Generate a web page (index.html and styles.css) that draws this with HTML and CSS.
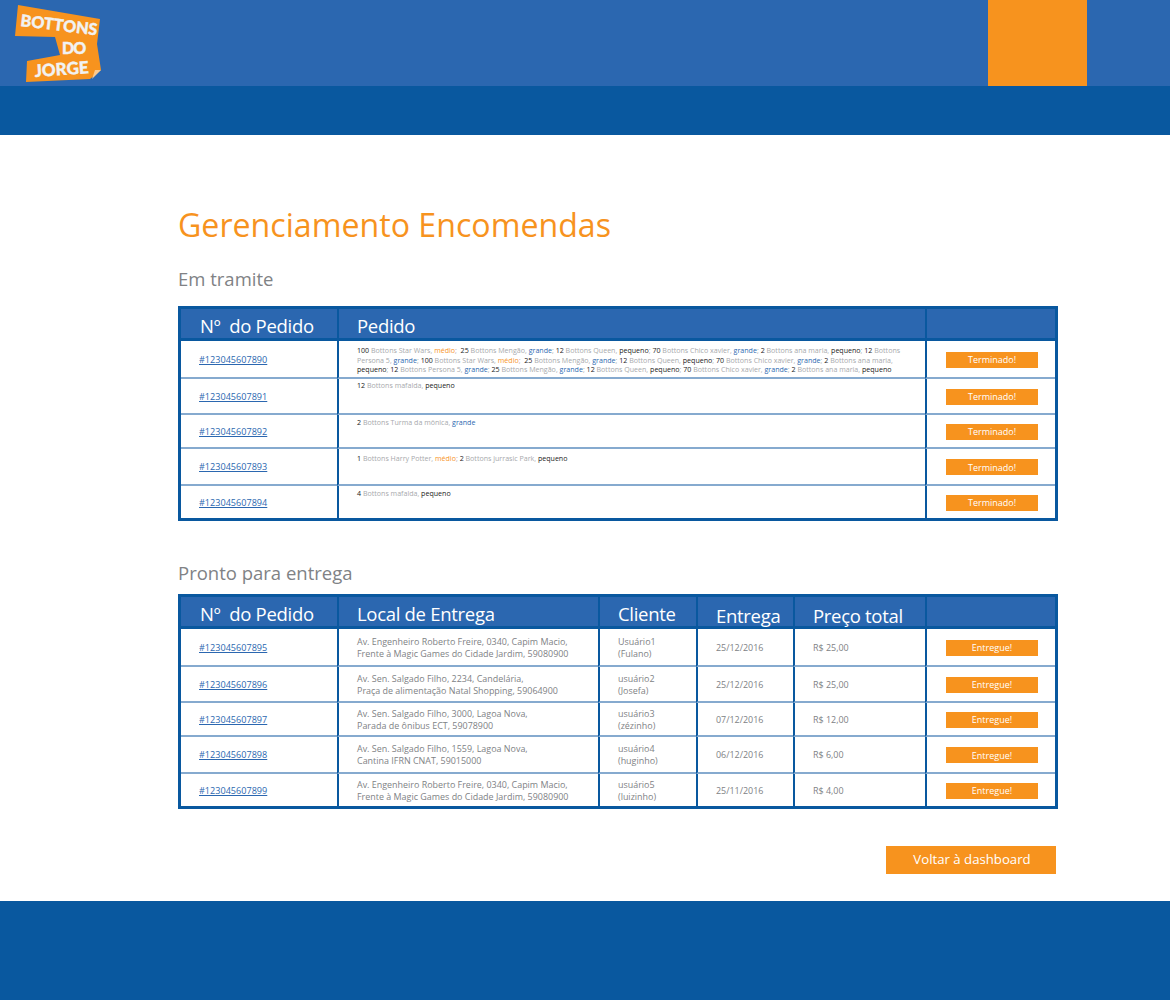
FILE: index.html
```html
<!DOCTYPE html>
<html lang="pt-BR">
<head>
<meta charset="utf-8">
<title>Gerenciamento Encomendas</title>
<link rel="stylesheet" href="styles.css">
</head>
<body>
<header class="top">
  <div class="brand-bar">
    <svg class="logo" width="110" height="86" viewBox="0 0 110 86" role="img" aria-label="Bottons do Jorge">
      <polygon class="logo-paper" points="18,5 100,19 97,44 101,70 90,79 26,82 27,61 60,55 55,37 15,36"/>
      <polygon class="logo-fold" points="95,70 101,70 92,79"/>
      <text class="logo-text" x="20" y="26" transform="rotate(7 20 26)">BOTTONS</text>
      <text class="logo-text logo-do" x="62" y="54">DO</text>
      <text class="logo-text logo-jorge" x="35" y="77" transform="rotate(-4 35 77)">JORGE</text>
    </svg>
    <div class="profile-box"></div>
  </div>
  <div class="nav-bar"></div>
</header>

<main class="content">
  <h1 class="title">Gerenciamento Encomendas</h1>

  <h2 class="section-title">Em tramite</h2>
  <table class="orders">
    <colgroup><col class="c-id"><col class="c-order"><col class="c-action"></colgroup>
    <thead><tr><th>Nº&nbsp; do Pedido</th><th>Pedido</th><th></th></tr></thead>
    <tbody>
      <tr class="h38">
        <td class="id"><a href="#">#123045607890</a></td>
        <td class="items"><b>100</b> Bottons Star Wars, <i class="m">médio</i>;&nbsp; <b>25</b> Bottons Mengão, <i class="g">grande</i>; <b>12</b> Bottons Queen, <b>pequeno</b>; <b>70</b> Bottons Chico xavier, <i class="g">grande</i>; <b>2</b> Bottons ana maria, <b>pequeno</b>; <b>12</b> Bottons<br>Persona 5, <i class="g">grande</i>; <b>100</b> Bottons Star Wars, <i class="m">médio</i>;&nbsp; <b>25</b> Bottons Mengão, <i class="g">grande</i>; <b>12</b> Bottons Queen, <b>pequeno</b>; <b>70</b> Bottons Chico xavier, <i class="g">grande</i>; <b>2</b> Bottons ana maria,<br><b>pequeno</b>; <b>12</b> Bottons Persona 5, <i class="g">grande</i>; <b>25</b> Bottons Mengão, <i class="g">grande</i>; <b>12</b> Bottons Queen, <b>pequeno</b>; <b>70</b> Bottons Chico xavier, <i class="g">grande</i>; <b>2</b> Bottons ana maria, <b>pequeno</b></td>
        <td class="action"><button class="mini-btn">Terminado!</button></td>
      </tr>
      <tr class="h36">
        <td class="id"><a href="#">#123045607891</a></td>
        <td class="items"><b>12</b> Bottons mafalda, <b>pequeno</b></td>
        <td class="action"><button class="mini-btn">Terminado!</button></td>
      </tr>
      <tr class="h34">
        <td class="id"><a href="#">#123045607892</a></td>
        <td class="items"><b>2</b> Bottons Turma da mônica, <i class="g">grande</i></td>
        <td class="action"><button class="mini-btn">Terminado!</button></td>
      </tr>
      <tr class="h37">
        <td class="id"><a href="#">#123045607893</a></td>
        <td class="items"><b>1</b> Bottons Harry Potter, <i class="m">médio</i>; <b>2</b> Bottons jurrasic Park, <b>pequeno</b></td>
        <td class="action"><button class="mini-btn">Terminado!</button></td>
      </tr>
      <tr class="h32">
        <td class="id"><a href="#">#123045607894</a></td>
        <td class="items"><b>4</b> Bottons mafalda, <b>pequeno</b></td>
        <td class="action"><button class="mini-btn">Terminado!</button></td>
      </tr>
    </tbody>
  </table>

  <h2 class="section-title second">Pronto para entrega</h2>
  <table class="orders">
    <colgroup><col class="c-id"><col class="c-place"><col class="c-client"><col class="c-date"><col class="c-price"><col class="c-action"></colgroup>
    <thead><tr><th>Nº&nbsp; do Pedido</th><th>Local de Entrega</th><th>Cliente</th><th class="drop">Entrega</th><th class="drop">Preço total</th><th></th></tr></thead>
    <tbody>
      <tr class="h38">
        <td class="id"><a href="#">#123045607895</a></td>
        <td class="info">Av. Engenheiro Roberto Freire, 0340, Capim Macio,<br>Frente à Magic Games do Cidade Jardim, 59080900</td>
        <td class="info">Usuário1<br>(Fulano)</td>
        <td class="info">25/12/2016</td>
        <td class="info">R$ 25,00</td>
        <td class="action"><button class="mini-btn">Entregue!</button></td>
      </tr>
      <tr class="h36">
        <td class="id"><a href="#">#123045607896</a></td>
        <td class="info">Av. Sen. Salgado Filho, 2234, Candelária,<br>Praça de alimentação Natal Shopping, 59064900</td>
        <td class="info">usuário2<br>(Josefa)</td>
        <td class="info">25/12/2016</td>
        <td class="info">R$ 25,00</td>
        <td class="action"><button class="mini-btn">Entregue!</button></td>
      </tr>
      <tr class="h34">
        <td class="id"><a href="#">#123045607897</a></td>
        <td class="info">Av. Sen. Salgado Filho, 3000, Lagoa Nova,<br>Parada de ônibus ECT, 59078900</td>
        <td class="info">usuário3<br>(zézinho)</td>
        <td class="info">07/12/2016</td>
        <td class="info">R$ 12,00</td>
        <td class="action"><button class="mini-btn">Entregue!</button></td>
      </tr>
      <tr class="h37">
        <td class="id"><a href="#">#123045607898</a></td>
        <td class="info">Av. Sen. Salgado Filho, 1559, Lagoa Nova,<br>Cantina IFRN CNAT, 59015000</td>
        <td class="info">usuário4<br>(huginho)</td>
        <td class="info">06/12/2016</td>
        <td class="info">R$ 6,00</td>
        <td class="action"><button class="mini-btn">Entregue!</button></td>
      </tr>
      <tr class="h32">
        <td class="id"><a href="#">#123045607899</a></td>
        <td class="info">Av. Engenheiro Roberto Freire, 0340, Capim Macio,<br>Frente à Magic Games do Cidade Jardim, 59080900</td>
        <td class="info">usuário5<br>(luizinho)</td>
        <td class="info">25/11/2016</td>
        <td class="info">R$ 4,00</td>
        <td class="action"><button class="mini-btn">Entregue!</button></td>
      </tr>
    </tbody>
  </table>

  <div class="back-row"><a class="back-btn" href="#">Voltar à dashboard</a></div>
</main>

<footer class="bottom"></footer>
</body>
</html>
```

FILE: styles.css
```css
* { box-sizing: border-box; }

body {
  margin: 0;
  background: #fff;
  color: #808285;
  font-family: "Open Sans", "Noto Sans", sans-serif;
}

.brand-bar {
  height: 86px;
  background: #2b67b0;
  display: flex;
  justify-content: space-between;
  padding-right: 83px;
}

.logo { display: block; }
.logo-paper { fill: #f7931e; }
.logo-fold { fill: #fbc98e; }
.logo-text {
  fill: #f1f2f2;
  stroke: #f1f2f2;
  stroke-width: 0.4px;
  font-family: "Lato", sans-serif;
  font-weight: 900;
  font-size: 16.2px;
}
.logo-do { font-size: 16px; letter-spacing: -1px; }
.logo-jorge { font-size: 17px; }

.profile-box { width: 99px; background: #f7931e; }
.nav-bar { height: 49px; background: #09589f; }

.content {
  height: 766px;
  padding: 72px 112px 0 178px;
}

.title {
  margin: 0;
  height: 36px;
  font-size: 32.15px;
  line-height: 36px;
  font-weight: 400;
  color: #f7931e;
}

.section-title {
  margin: 23px 0 14px;
  height: 26px;
  font-size: 18.5px;
  line-height: 26px;
  font-weight: 400;
  color: #808285;
}

.section-title.second { margin: 39px 0 8px; }

.orders {
  width: 880px;
  table-layout: fixed;
  border-collapse: separate;
  border-spacing: 0;
  border: 3px solid #09589f;
}

.c-id { width: 156px; }
.c-order { width: 588px; }
.c-place { width: 261px; }
.c-client { width: 98px; }
.c-date { width: 97px; }
.c-price { width: 132px; }
.c-action { width: 130px; }

.orders th {
  height: 32px;
  padding: 4px 0 0 18px;
  background: #2b67b0;
  border-left: 2px solid #09589f;
  border-bottom: 3px solid #09589f;
  color: #fff;
  font-size: 18.5px;
  line-height: 20px;
  letter-spacing: -0.3px;
  font-weight: 400;
  text-align: left;
  white-space: nowrap;
}

.orders th:first-child { padding-left: 19px; border-left: 0; }
.orders th.drop { padding-top: 8px; }

.orders td {
  padding: 0 0 0 18px;
  border-left: 2px solid #09589f;
  border-bottom: 2px solid #86aacf;
  vertical-align: middle;
}

.orders td:first-child { border-left: 0; }
.orders tr:last-child td { border-bottom: 0; }

.h38 { height: 38px; }
.h36 { height: 36px; }
.h34 { height: 34px; }
.h37 { height: 37px; }
.h32 { height: 32px; }

.orders td.id {
  padding-top: 1px;
  font-size: 9.1px;
  line-height: 12px;
}

.orders .id a { color: #2b67b0; }

.orders td.items {
  padding: 3px 0 0 18px;
  vertical-align: top;
  font-size: 7.08px;
  line-height: 9.6px;
  color: #a7a9ac;
  white-space: nowrap;
}

.h38 td.items, .h37 td.items { padding-top: 5px; }
.h36 td.items { padding-top: 2px; }

.items b { font-weight: 400; color: #1a1a1a; }
.items i { font-style: normal; }
.items .m { color: #f7931e; }
.items .g { color: #2b67b0; }

.orders td.info {
  padding-top: 1px;
  font-size: 8.95px;
  line-height: 12px;
  color: #808285;
  white-space: nowrap;
}

.orders td.action { padding: 1px 0 0 19px; }

.mini-btn {
  display: block;
  width: 92px;
  height: 16px;
  padding: 0;
  border: 0;
  background: #f7931e;
  color: #fff;
  font-family: inherit;
  font-size: 9px;
}

.back-row {
  display: flex;
  justify-content: flex-end;
  margin: 37px 2px 0 0;
}

.back-btn {
  display: block;
  width: 170px;
  height: 28px;
  padding-left: 2px;
  background: #f7931e;
  color: #fff;
  font-size: 13.2px;
  line-height: 27px;
  text-align: center;
  text-decoration: none;
}

.bottom { height: 99px; background: #09589f; }
```
